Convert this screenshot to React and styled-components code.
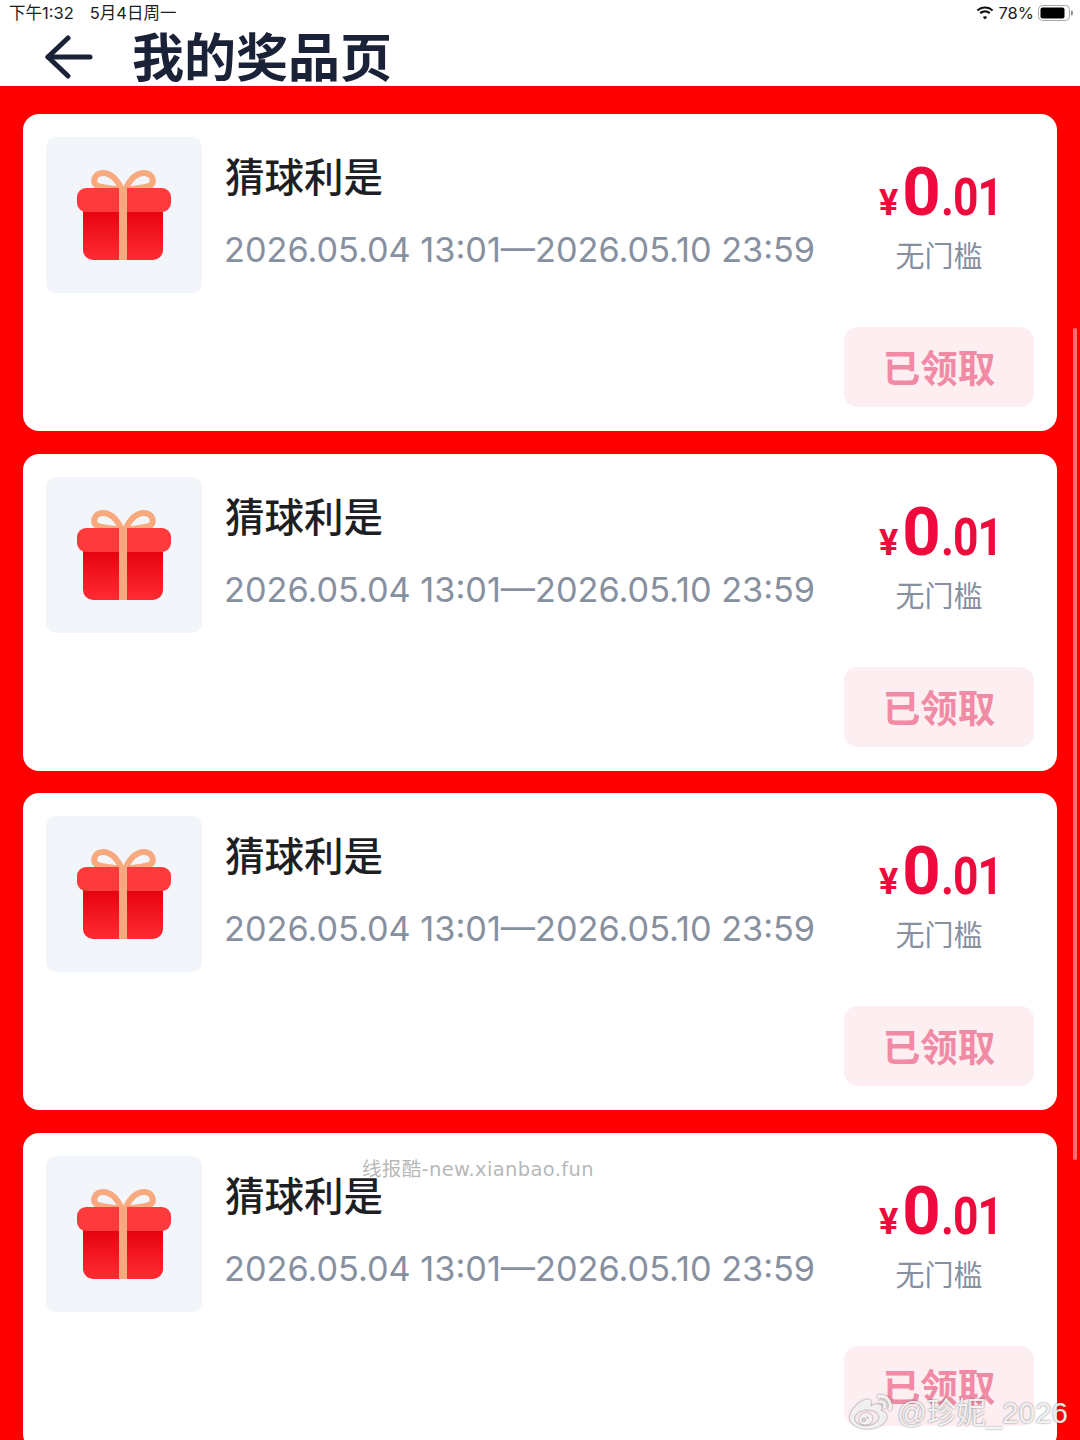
import React from "react";
import styled, { createGlobalStyle } from "styled-components";
import { FaWeibo } from "react-icons/fa";

const cjk = `"Inter", "Noto Sans CJK SC", sans-serif`;

const GlobalStyle = createGlobalStyle`
  html, body {
    margin: 0;
    padding: 0;
    background: #ff0000;
  }
  * {
    box-sizing: border-box;
  }
`;

const Page = styled.div`
  position: relative;
  width: 1080px;
  height: 1440px;
  overflow: hidden;
  font-family: ${cjk};
  background: #ff0000;
`;

const TopArea = styled.header`
  height: 86px;
  background: #fff;
  box-shadow: 0 1px 1px rgba(120, 0, 0, 0.25);
`;

const StatusBar = styled.div`
  height: 28px;
  padding: 3px 6px 0 9px;
  display: flex;
  justify-content: space-between;
  align-items: flex-start;
  font-size: 16.5px;
  line-height: 20px;
  color: #1c1c1e;
`;

const StatusLeft = styled.div`
  display: flex;
  gap: 16px;
`;

const StatusRight = styled.div`
  display: flex;
  align-items: center;
  gap: 4px;
`;

const TitleRow = styled.div`
  display: flex;
  align-items: center;
  padding-left: 45px;
  gap: 39px;
  height: 58px;
`;

const Title = styled.h1`
  margin: -4px 0 0;
  font-size: 52px;
  line-height: 58px;
  font-weight: 700;
  color: #1a2238;
  font-family: "Noto Sans CJK SC", sans-serif;
`;

const List = styled.main`
  padding: 28px 23px 0;
  display: flex;
  flex-direction: column;
  gap: 22.7px;
`;

const Card = styled.section`
  flex: none;
  height: 317px;
  padding: 23px;
  border-radius: 16px;
  background: #fff;
  display: flex;
  flex-direction: column;
`;

const TopRow = styled.div`
  display: flex;
`;

const Thumb = styled.div`
  width: 156px;
  height: 156px;
  flex: none;
  border-radius: 10px;
  background: #f2f5f9;
  display: flex;
  align-items: center;
  justify-content: center;
`;

const Info = styled.div`
  flex: 1;
  padding-left: 23px;
  padding-top: 9px;
  min-width: 0;
`;

const Name = styled.div`
  font-family: "Noto Sans CJK SC", sans-serif;
  font-size: 39.5px;
  line-height: 58px;
  font-weight: 500;
  color: #1d1f24;
`;

const Period = styled.div`
  margin-top: 25px;
  margin-left: -1px;
  font-size: 34.25px;
  line-height: 42px;
  color: #87909f;
  white-space: nowrap;
`;

const Price = styled.div`
  width: 190px;
  flex: none;
  display: flex;
  flex-direction: column;
  align-items: center;
  padding-top: 22px;
`;

const Amount = styled.div`
  display: flex;
  align-items: baseline;
  justify-content: center;
  height: 66px;
  line-height: 66px;
  font-family: "Roboto", sans-serif;
  font-weight: 700;
  color: #ee0a3d;
`;

const Yen = styled.span`
  font-size: 36px;
  margin-right: 4px;
`;

const Big = styled.span`
  font-size: 67px;
`;

const Small = styled.span`
  display: inline-block;
  font-size: 51px;
  letter-spacing: -1px;
  transform: scaleX(0.87);
  transform-origin: left bottom;
  margin-right: -12px;
`;

const Threshold = styled.div`
  margin-top: 8px;
  font-size: 29px;
  line-height: 42px;
  color: #87909f;
  font-family: "Noto Sans CJK SC", sans-serif;
`;

const BottomRow = styled.div`
  margin-top: 34px;
  display: flex;
  justify-content: flex-end;
`;

const ClaimedButton = styled.button`
  width: 190px;
  height: 80px;
  border: 0;
  padding: 0 0 3px;
  border-radius: 14px;
  background: #fdeef1;
  color: #f18aa5;
  font-family: "Noto Sans CJK SC", sans-serif;
  font-size: 37.5px;
  font-weight: 700;
`;

const ScrollThumb = styled.div`
  position: absolute;
  left: 1073px;
  top: 328px;
  width: 4px;
  height: 832px;
  border-radius: 2px;
  background: #ff6f6f;
`;

const SiteMark = styled.div`
  position: absolute;
  left: 362px;
  top: 1157px;
  font-size: 19.5px;
  letter-spacing: 0.35px;
  line-height: 26px;
  font-family: "DejaVu Sans", "Noto Sans CJK SC", sans-serif;
  color: rgba(120, 120, 120, 0.55);
`;

const WeiboMark = styled.div`
  position: absolute;
  left: 850px;
  top: 1392px;
  display: flex;
  align-items: center;
  gap: 5px;
  font-size: 29.5px;
  line-height: 40px;
  white-space: nowrap;
  color: rgba(255, 255, 255, 0.88);
  text-shadow: 0 0 2px rgba(70, 70, 70, 0.75);
  font-family: "Liberation Sans", "Noto Sans CJK SC", sans-serif;
  svg {
    filter: drop-shadow(0 0 1px rgba(70, 70, 70, 0.8));
  }
`;

const BackArrow = () => (
  <svg width="48" height="44" viewBox="0 0 48 44" fill="none" stroke="#1a2238" strokeWidth="5" strokeLinecap="round" strokeLinejoin="round">
    <path d="M45 22H3" />
    <path d="M23 3L3 22l20 19" />
  </svg>
);

const Wifi = () => (
  <svg width="18" height="14" viewBox="0 0 18 14" fill="#111">
    <path d="M9 2.6c2.6 0 5 1 6.8 2.7L17.3 3.7C15.1 1.600 12.200.4 9 .4S2.900 1.600.700 3.700L2.200 5.300C4 3.600 6.400 2.600 9 2.600z" />
    <path d="M9 6.500c1.500 0 2.900.6 4 1.600l1.500-1.600C13 5.100 11.100 4.300 9 4.300s-4 .8-5.500 2.200L5 8.100c1.100-1 2.500-1.600 4-1.600z" />
    <path d="M9 10.200c-.9 0-1.600.3-2.200.9L9 13.500l2.200-2.400c-.6-.6-1.300-.9-2.200-.9z" />
  </svg>
);

const Battery = () => (
  <svg width="36" height="16" viewBox="0 0 36 16">
    <rect x="0.500" y="0.500" width="31" height="15" rx="4" fill="none" stroke="#a8a8a8" />
    <rect x="2.500" y="2.500" width="24" height="11" rx="2" fill="#000" />
    <rect x="33" y="5.500" width="1.800" height="5" rx="0.900" fill="#888" />
  </svg>
);

const Gift = () => (
  <svg width="94" height="94" viewBox="0 0 94 94" fill="none">
    <defs>
      <linearGradient id="giftBody" x1="0" y1="0" x2="0" y2="1">
        <stop offset="0" stopColor="#e4000e" />
        <stop offset="1" stopColor="#ff2b33" />
      </linearGradient>
    </defs>
    <path d="M45 22C40 11 33 5 26 5c-8 0-11 8-7 12 4 3 14 3 26 5z" stroke="#f8a97e" strokeWidth="6" />
    <path d="M48 22C53 11 60 5 67 5c8 0 11 8 7 12-4 3-14 3-26 5z" stroke="#f8a97e" strokeWidth="6" />
    <path d="M6 40h80v42a10 10 0 0 1-10 10H16A10 10 0 0 1 6 82z" fill="url(#giftBody)" />
    <rect x="0" y="20" width="94" height="24" rx="9" fill="#ff3a3c" />
    <rect x="42" y="20" width="8" height="72" fill="#f8a97e" />
  </svg>
);

const prizes = [1, 2, 3, 4];

const App = () => {
  return (
    <Page>
      <GlobalStyle />
      <TopArea>
        <StatusBar>
          <StatusLeft>
            <span>下午1:32</span>
            <span>5月4日周一</span>
          </StatusLeft>
          <StatusRight>
            <Wifi />
            <span>78%</span>
            <Battery />
          </StatusRight>
        </StatusBar>
        <TitleRow>
          <BackArrow />
          <Title>我的奖品页</Title>
        </TitleRow>
      </TopArea>
      <List>
        {prizes.map(id => (
          <Card key={id}>
            <TopRow>
              <Thumb>
                <Gift />
              </Thumb>
              <Info>
                <Name>猜球利是</Name>
                <Period>2026.05.04 13:01—2026.05.10 23:59</Period>
              </Info>
              <Price>
                <Amount>
                  <Yen>¥</Yen>
                  <Big>0</Big>
                  <Small>.01</Small>
                </Amount>
                <Threshold>无门槛</Threshold>
              </Price>
            </TopRow>
            <BottomRow>
              <ClaimedButton>已领取</ClaimedButton>
            </BottomRow>
          </Card>
        ))}
      </List>
      <ScrollThumb />
      <SiteMark>线报酷-new.xianbao.fun</SiteMark>
      <WeiboMark>
        <FaWeibo size={42} />
        <span>@珍妮_2026</span>
      </WeiboMark>
    </Page>
  );
};

export default App;
